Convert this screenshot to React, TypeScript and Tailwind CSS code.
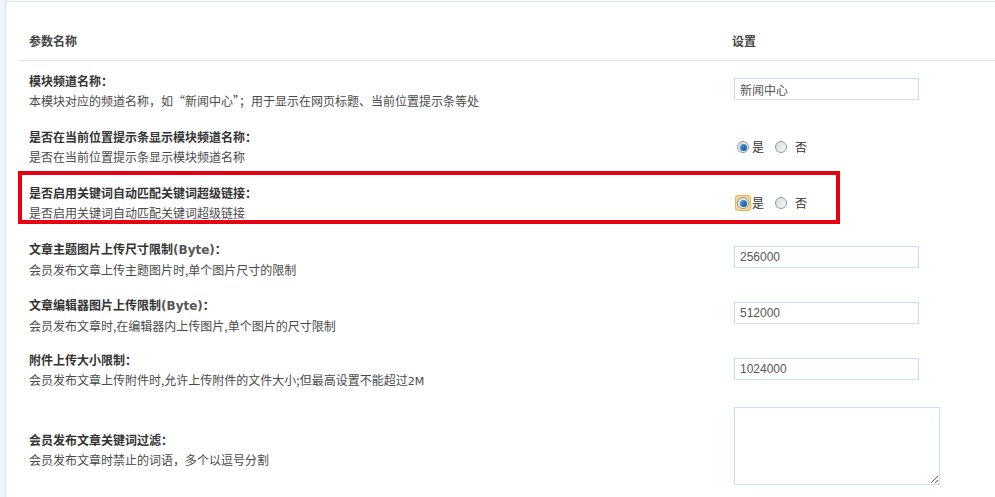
import { ReactNode } from "react";

interface Setting {
  id: string;
  title: ReactNode;
  desc: ReactNode;
  kind: "text" | "radio" | "textarea";
  value?: string;
  focused?: boolean;
  marked?: boolean;
}

const settings: Setting[] = [
  {
    id: "name",
    title: "模块频道名称：",
    desc: "本模块对应的频道名称，如\u201C新闻中心\u201D；用于显示在网页标题、当前位置提示条等处",
    kind: "text",
    value: "新闻中心",
  },
  {
    id: "crumb",
    title: "是否在当前位置提示条显示模块频道名称：",
    desc: "是否在当前位置提示条显示模块频道名称",
    kind: "radio",
  },
  {
    id: "keyword",
    title: "是否启用关键词自动匹配关键词超级链接：",
    desc: "是否启用关键词自动匹配关键词超级链接",
    kind: "radio",
    focused: true,
    marked: true,
  },
  {
    id: "thumb",
    title: (
      <>
        文章主题图片上传尺寸限制<span className="font-['DejaVu_Sans'] text-[#555]">(Byte)</span>：
      </>
    ),
    desc: "会员发布文章上传主题图片时,单个图片尺寸的限制",
    kind: "text",
    value: "256000",
  },
  {
    id: "editor",
    title: (
      <>
        文章编辑器图片上传限制<span className="font-['DejaVu_Sans'] text-[#555]">(Byte)</span>：
      </>
    ),
    desc: "会员发布文章时,在编辑器内上传图片,单个图片的尺寸限制",
    kind: "text",
    value: "512000",
  },
  {
    id: "attach",
    title: "附件上传大小限制：",
    desc: (
      <>
        会员发布文章上传附件时,允许上传附件的文件大小;但最高设置不能超过
        <span className="font-['DejaVu_Sans'] text-[11px]">2M</span>
      </>
    ),
    kind: "text",
    value: "1024000",
  },
  {
    id: "filter",
    title: "会员发布文章关键词过滤：",
    desc: "会员发布文章时禁止的词语，多个以逗号分割",
    kind: "textarea",
  },
];

const Radio = ({ checked, focused }: { checked?: boolean; focused?: boolean }) => (
  <span
    className={
      focused
        ? "flex h-[14px] w-[14px] items-center justify-center rounded-[2px] bg-[#f6d58c] ring-1 ring-[#e8b659]"
        : "flex h-[14px] w-[14px] items-center justify-center"
    }
  >
    <span className="flex h-[12px] w-[12px] items-center justify-center rounded-full border border-[#8e9aa6] bg-gradient-to-br from-[#d9dde1] to-[#f8f8f8]">
      {checked && (
        <span className="h-[7px] w-[7px] rounded-full bg-gradient-to-br from-[#4fa3e6] to-[#0c4d8e]" />
      )}
    </span>
  </span>
);

const Control = ({ s }: { s: Setting }) => {
  if (s.kind === "text") {
    return (
      <input
        readOnly
        value={s.value}
        className="h-[22px] w-[185px] border border-[#c7def3] bg-white px-[5px] font-['Liberation_Sans','Noto_Sans_CJK_SC',sans-serif] text-[12px] text-[#555] outline-none"
      />
    );
  }
  if (s.kind === "textarea") {
    return (
      <textarea
        readOnly
        className="block h-[78px] w-[206px] border border-[#c7def3] bg-white outline-none"
      />
    );
  }
  return (
    <div className="flex items-center pl-[2px] pt-[4px] text-[12px] text-[#333]">
      <Radio checked focused={s.focused} />
      <span className="ml-[2px]">是</span>
      <span className="ml-[10px]">
        <Radio />
      </span>
      <span className="ml-[7px]">否</span>
    </div>
  );
};

const App = () => {
  return (
    <div className="flex h-[497px] w-full overflow-hidden bg-white pt-px font-['Noto_Sans_CJK_SC',sans-serif] text-[12px]">
      <div className="-mt-px w-[6px] shrink-0 border-r border-[#d3e5f5] bg-[#eef5fc]" />
      <div className="flex-1 border-t border-[#d3e5f5] pl-[13px]">
        <div className="grid h-[59px] grid-cols-[705px_1fr] border-b border-[#d6e8f6] pt-[30px] font-bold leading-[18px] text-[#444]">
          <div className="pl-[10px]">参数名称</div>
          <div className="pl-[8px]">设置</div>
        </div>

        {settings.map((s) => (
          <div
            key={s.id}
            className={
              s.kind === "textarea"
                ? "relative grid grid-cols-[705px_1fr] items-center py-[10px]"
                : "relative grid h-[56px] grid-cols-[705px_1fr] items-center"
            }
          >
            <div
              className={
                s.kind === "textarea"
                  ? "pl-[10px] pt-[8px] leading-[20px]"
                  : "pl-[10px] pt-[4px] leading-[20px]"
              }
            >
              <div className="font-bold text-[#333]">{s.title}</div>
              <div className="text-[#4a4a4a]">{s.desc}</div>
            </div>
            <div className="pl-[10px]">
              <Control s={s} />
            </div>
            {s.marked && (
              <div className="pointer-events-none absolute left-[-1px] top-[-2px] h-[53px] w-[822px] border-[4px] border-[#e60012]" />
            )}
          </div>
        ))}
      </div>
    </div>
  );
};

export default App;
